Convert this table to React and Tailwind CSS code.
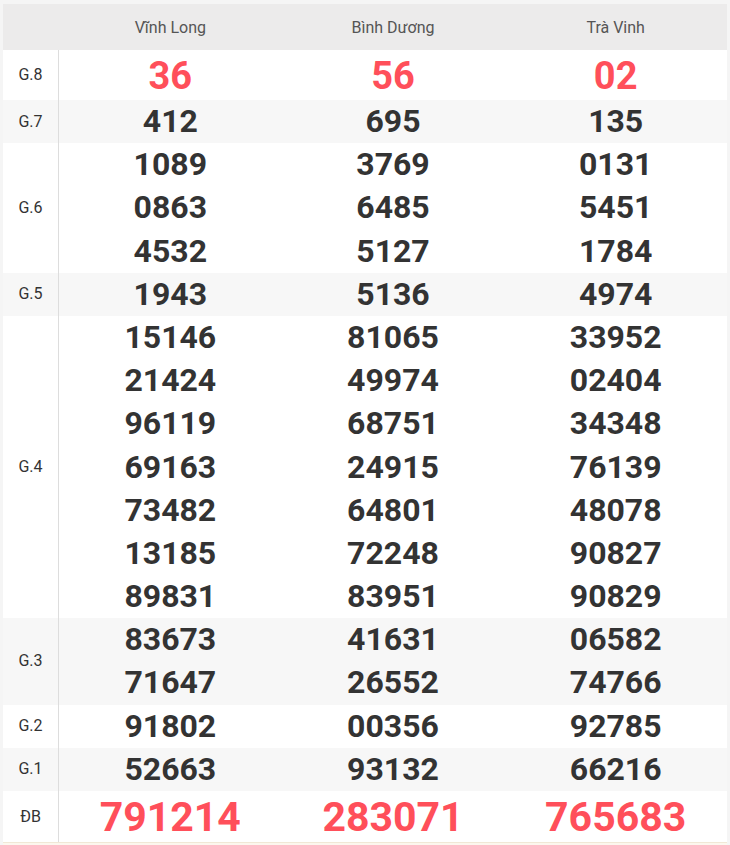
const provinces = ['Vĩnh Long', 'Bình Dương', 'Trà Vinh'];

const prizes = [
  { label: 'G.8', values: [['36'], ['56'], ['02']], special: 'g8' },
  { label: 'G.7', values: [['412'], ['695'], ['135']] },
  {
    label: 'G.6',
    values: [
      ['1089', '0863', '4532'],
      ['3769', '6485', '5127'],
      ['0131', '5451', '1784'],
    ],
  },
  { label: 'G.5', values: [['1943'], ['5136'], ['4974']] },
  {
    label: 'G.4',
    values: [
      ['15146', '21424', '96119', '69163', '73482', '13185', '89831'],
      ['81065', '49974', '68751', '24915', '64801', '72248', '83951'],
      ['33952', '02404', '34348', '76139', '48078', '90827', '90829'],
    ],
  },
  {
    label: 'G.3',
    values: [
      ['83673', '71647'],
      ['41631', '26552'],
      ['06582', '74766'],
    ],
  },
  { label: 'G.2', values: [['91802'], ['00356'], ['92785']] },
  { label: 'G.1', values: [['52663'], ['93132'], ['66216']] },
  { label: 'ĐB', values: [['791214'], ['283071'], ['765683']], special: 'db' },
];

function NumberCell({ nums, special }) {
  if (special === 'g8') {
    return (
      <div className="flex h-[50px] items-center justify-center pt-[1px] text-[38px] font-bold leading-none text-[#ff4f5a]">
        {nums[0]}
      </div>
    );
  }
  if (special === 'db') {
    return (
      <div className="flex h-[51px] items-center justify-center pt-[2px] text-[41px] font-bold leading-none text-[#ff4f5a]">
        {nums[0]}
      </div>
    );
  }
  return (
    <div className="flex flex-col items-center">
      {nums.map((n) => (
        <div key={n} className="text-[32px] font-bold leading-[1.35] text-[#333]">
          {n}
        </div>
      ))}
    </div>
  );
}

export default function App() {
  return (
    <div
      className="min-h-screen bg-[#f5f5f5] px-[3px] pt-[4px]"
      style={{ fontFamily: 'Roboto, "Liberation Sans", sans-serif' }}
    >
      <div className="bg-white">
        {/* Header */}
        <div className="grid h-[46px] grid-cols-[56px_1fr_1fr_1fr] items-center bg-[#ecebeb]">
          <div />
          {provinces.map((p) => (
            <div key={p} className="pt-[2px] text-center text-[16px] text-[#555]">
              {p}
            </div>
          ))}
        </div>

        {prizes.map((row, i) => (
          <div
            key={row.label}
            className={
              'grid grid-cols-[56px_1fr_1fr_1fr] ' + (i % 2 === 1 ? 'bg-[#f7f7f7]' : 'bg-white')
            }
          >
            <div className="flex items-center justify-center border-r border-[#dddddd] text-[16px] text-[#333]">
              {row.label}
            </div>
            {row.values.map((nums, j) => (
              <NumberCell key={j} nums={nums} special={row.special} />
            ))}
          </div>
        ))}
      </div>
      <div className="h-[6px] border-t border-[#f1e8d6] bg-[#fcf7ee]" />
    </div>
  );
}
